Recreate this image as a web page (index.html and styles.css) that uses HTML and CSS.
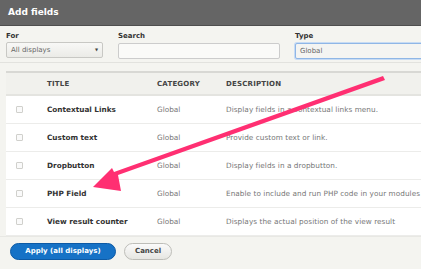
FILE: index.html
```html
<!DOCTYPE html>
<html>
<head>
<meta charset="utf-8">
<link rel="stylesheet" href="styles.css">
</head>
<body>
<div class="dialog">
  <div class="titlebar">Add fields</div>
  <div class="filters">
    <div class="field f-for">
      <label>For</label>
      <div class="select">All displays <span class="caret">▼</span></div>
    </div>
    <div class="field f-search">
      <label>Search</label>
      <div class="input"></div>
    </div>
    <div class="field f-type">
      <label>Type</label>
      <div class="input focus">Global</div>
    </div>
  </div>
  <div class="tablewrap">
    <table>
      <colgroup><col class="w-chk"><col class="w-title"><col class="w-cat"><col class="w-desc"></colgroup>
      <thead>
        <tr><th></th><th>TITLE</th><th>CATEGORY</th><th>DESCRIPTION</th></tr>
      </thead>
      <tbody>
        <tr><td class="c-chk"><span class="chk"></span></td><td class="c-title">Contextual Links</td><td class="c-cat">Global</td><td class="desc">Display fields in a contextual links menu.</td></tr>
        <tr><td class="c-chk"><span class="chk"></span></td><td class="c-title">Custom text</td><td class="c-cat">Global</td><td class="desc">Provide custom text or link.</td></tr>
        <tr><td class="c-chk"><span class="chk"></span></td><td class="c-title">Dropbutton</td><td class="c-cat">Global</td><td class="desc">Display fields in a dropbutton.</td></tr>
        <tr><td class="c-chk"><span class="chk"></span></td><td class="c-title">PHP Field</td><td class="c-cat">Global</td><td class="desc">Enable to include and run PHP code in your modules as part of a view</td></tr>
        <tr><td class="c-chk"><span class="chk"></span></td><td class="c-title">View result counter</td><td class="c-cat">Global</td><td class="desc">Displays the actual position of the view result</td></tr>
      </tbody>
    </table>
  </div>
  <div class="footer">
    <button class="btn primary">Apply (all displays)</button>
    <button class="btn">Cancel</button>
  </div>
  <svg class="arrow" width="421" height="269" viewBox="0 0 421 269">
    <path d="M383 76 L385 80 L118 175 L121 191 L93 187 L112 168 L114 172 Z" fill="#ff2f72"/>
  </svg>
</div>
</body>
</html>
```
FILE: styles.css
```css
* { box-sizing: border-box; }
html, body { margin: 0; padding: 0; }
body {
  width: 421px;
  height: 269px;
  overflow: hidden;
  font-family: "DejaVu Sans", sans-serif;
  background: #f4f4f0;
}
.dialog { position: relative; width: 421px; height: 269px; background: #f4f4f0; overflow: hidden; }
.titlebar {
  height: 26px;
  background: #656565;
  border-bottom: 1px solid #4e4e4e;
  color: #fff;
  font-weight: bold;
  font-size: 9px;
  line-height: 25px;
  padding-left: 8px;
}
.filters {
  display: flex;
  padding: 6px 0 0 6px;
  height: 37px;
  border-bottom: 1px solid #e2e2de;
  background: #f4f4f0;
}
.field label {
  display: block;
  font-size: 7px;
  font-weight: bold;
  color: #333;
  height: 10px;
  line-height: 9px;
}
.f-for { width: 112px; }
.f-search { width: 177px; }
.f-type { flex: 1; }
.select, .input {
  height: 16px;
  border: 1px solid #ccc;
  background: #f2f2ee;
  font-size: 7px;
  color: #666;
  line-height: 14px;
  padding-left: 4px;
  border-radius: 2px;
}
.select {
  width: 97px;
  display: flex;
  justify-content: space-between;
  padding-right: 4px;
  background: linear-gradient(#f8f8f6, #ebebe7);
  border-color: #c8c8c4;
}
.caret { font-size: 4px; color: #444; }
.f-search .input { width: 162px; background: #fafaf8; margin-top: 1px; }
.input.focus {
  border: 1px solid #8fb6e6;
  box-shadow: 0 0 0 1px #c7dbf4;
  background: #f4f4f2;
  margin-right: -6px;
  margin-top: 1px;
}
.tablewrap {
  padding: 8px 0 0 6px;
  overflow: hidden;
}
table {
  border-collapse: collapse;
  table-layout: fixed;
  width: 430px;
  background: #fff;
  font-size: 7.3px;
}
.w-chk { width: 41px; }
.w-title { width: 110px; }
.w-cat { width: 69px; }
thead tr { background: #f1f1ed; border-top: 2px solid #d8d8d4; border-bottom: 2px solid #e4e4e0; }
th {
  text-align: left;
  font-weight: bold;
  color: #444;
  height: 23px;
  padding: 0;
  font-size: 7px;
  letter-spacing: 0.2px;
}
tbody tr { height: 28px; }
td { padding: 0; border-bottom: 1px solid #ececea; }
.c-chk { padding-left: 10px; }
.c-cat { color: #777; }
td.c-title { font-weight: bold; color: #333; }
.desc { color: #777; white-space: nowrap; overflow: hidden; letter-spacing: 0.05px; }
.chk {
  display: inline-block;
  width: 7px;
  height: 7px;
  border: 1px solid #d0d0cc;
  border-radius: 1px;
  background: #fafafa;
  vertical-align: middle;
}
.footer {
  display: flex;
  gap: 8px;
  padding: 6px 0 0 10px;
  border-top: 1px solid #e8e8e4;
}
.btn {
  height: 17px;
  border-radius: 9px;
  font-family: "DejaVu Sans", sans-serif;
  font-size: 7px;
  font-weight: bold;
  padding: 0 10px;
  border: 1px solid #bdbdb8;
  background: linear-gradient(#fafafa, #e6e6e2);
  color: #444;
}
.btn.primary {
  width: 106px;
  background: #1672c6;
  border-color: #0d5aa5;
  color: #fff;
}
.arrow { position: absolute; left: 0; top: 0; pointer-events: none; }
```
